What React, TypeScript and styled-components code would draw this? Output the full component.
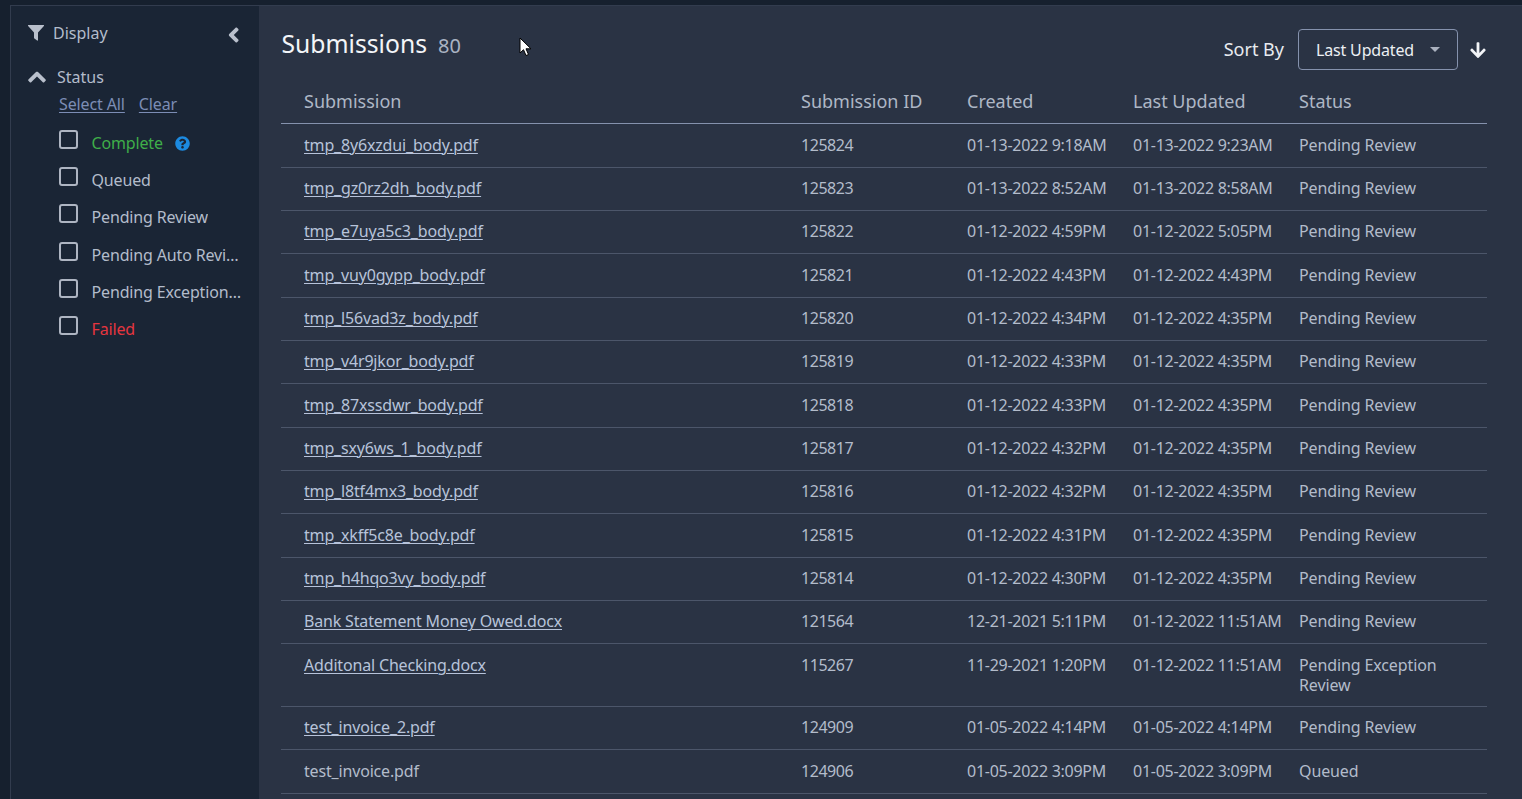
import React from "react";
import styled, { createGlobalStyle } from "styled-components";

const Global = createGlobalStyle`
  html, body { margin: 0; padding: 0; height: 100%; overflow: hidden; background: #16202e; }
  body { font-family: "Noto Sans", sans-serif; font-size: 16px; }
`;

const Page = styled.div`
  display: flex;
  height: 799px;
  padding: 5px 0 0 10px;
  box-sizing: border-box;
  background: #16202e;
`;

const Shell = styled.div`
  display: flex;
  flex: 1;
  min-width: 0;
  border-top: 1px solid #323c4e;
  border-left: 1px solid #323c4e;
`;

const Sidebar = styled.aside`
  width: 248px;
  flex: none;
  box-sizing: border-box;
  background: #1a2535;
  padding: 15px 0 0 17px;
  color: #b3bccb;
`;

const SideHead = styled.div`
  display: flex;
  align-items: center;
  height: 24px;
  font-size: 16px;
`;

const HeadLabel = styled.span`
  margin-left: 9px;
  flex: 1;
`;

const Collapse = styled.svg`
  width: 12px;
  height: 16px;
  margin-right: 19px;
  margin-top: 4px;
  fill: #b9c0cc;
`;

const StatusHead = styled.div`
  display: flex;
  align-items: center;
  height: 24px;
  margin-top: 20px;
`;

const StatusLabel = styled.span`
  margin-left: 11px;
`;

const LinkRow = styled.div`
  display: flex;
  gap: 14px;
  margin: 4px 0 0 31px;
  height: 22px;
  line-height: 22px;
  letter-spacing: -0.12px;
`;

const SideLink = styled.a`
  color: #7c8db5;
  text-decoration: underline;
  text-underline-offset: 2px;
  text-decoration-thickness: 1px;
`;

const Options = styled.ul`
  list-style: none;
  margin: 13px 0 0 31px;
  padding: 0;
`;

const Option = styled.li`
  display: flex;
  height: 37.2px;
  width: 184px;
`;

const Box = styled.span`
  width: 15px;
  height: 15px;
  flex: none;
  margin-top: 2px;
  border: 2px solid #aeb5c2;
  border-radius: 3px;
`;

const OptionLabel = styled.span<{ $tone?: string }>`
  margin-left: 13.5px;
  margin-top: 4px;
  line-height: 22px;
  height: 24px;
  letter-spacing: -0.15px;
  color: ${(p) => p.$tone ?? "#b3bccb"};
  white-space: nowrap;
  overflow: hidden;
  text-overflow: ellipsis;
`;

const Help = styled.svg`
  width: 15px;
  height: 15px;
  margin: 8px 0 0 12px;
  flex: none;
`;

const Main = styled.main`
  flex: 1;
  min-width: 0;
  background: #2a3344;
  padding: 0 35px 0 22px;
  position: relative;
  overflow: hidden;
`;

const TopBar = styled.div`
  display: flex;
  align-items: flex-start;
  height: 78px;
`;

const Title = styled.h1`
  margin: 19px 0 0 0.5px;
  font-size: 24.7px;
  line-height: 38px;
  font-weight: 400;
  color: #f3f5f8;
`;

const Count = styled.span`
  margin: 23px 0 0 11px;
  font-size: 20px;
  line-height: 34px;
  color: #aab3c3;
`;

const SortArea = styled.div`
  margin-left: auto;
  margin-top: 23px;
  margin-right: 1px;
  display: flex;
  align-items: center;
`;

const SortLabel = styled.span`
  color: #e8ebf0;
  font-size: 18px;
  line-height: 38px;
  margin: 0 14px 2px 0;
`;

const Select = styled.div`
  width: 160px;
  height: 41px;
  box-sizing: border-box;
  border: 1px solid #8592ad;
  border-radius: 4px;
  display: flex;
  align-items: center;
  padding-left: 17px;
  color: #eceff3;
  font-size: 16px;
  letter-spacing: -0.17px;
`;

const Caret = styled.span`
  margin-left: 16px;
  width: 0;
  height: 0;
  border-left: 5.5px solid transparent;
  border-right: 5.5px solid transparent;
  border-top: 5.5px solid #aab1bf;
`;

const SortArrow = styled.svg`
  width: 16px;
  height: 18px;
  margin-left: 12px;
  fill: #f2f4f7;
`;

const Cols = "497px 166px 166px 166px 1fr";

const HeaderRow = styled.div`
  display: grid;
  grid-template-columns: ${Cols};
  height: 40px;
  box-sizing: border-box;
  padding-left: 23px;
  border-bottom: 1px solid #8592ad;
  color: #aeb7c6;
  font-size: 18px;
  line-height: 34px;
`;

const Body = styled.div`
  padding-top: 0.33px;
`;

const Row = styled.div<{ $tall?: boolean }>`
  display: grid;
  grid-template-columns: ${Cols};
  height: ${(p) => (p.$tall ? "62.67px" : "43.33px")};
  box-sizing: border-box;
  padding: 10.33px 0 0 23px;
  border-bottom: 1px solid #4c566a;
  color: #b3bccb;
  font-size: 16px;
  line-height: 20px;
`;

const NameCell = styled.span`
  letter-spacing: -0.17px;
`;

const FileLink = styled.a`
  color: #b7c3da;
  text-decoration: underline;
  text-underline-offset: 2px;
  text-decoration-thickness: 1px;
`;

const IdCell = styled.span`
  letter-spacing: -0.45px;
`;

const DateCell = styled.span`
  letter-spacing: -0.27px;
`;

const StatusCell = styled.span`
  white-space: pre-line;
  letter-spacing: -0.12px;
`;

const Pointer = styled.svg`
  position: absolute;
  left: 260px;
  top: 31px;
  width: 13px;
  height: 20px;
`;

type R = [string, string, string, string, string, boolean?];

const rows: R[] = [
  ["tmp_8y6xzdui_body.pdf", "125824", "01-13-2022 9:18AM", "01-13-2022 9:23AM", "Pending Review"],
  ["tmp_gz0rz2dh_body.pdf", "125823", "01-13-2022 8:52AM", "01-13-2022 8:58AM", "Pending Review"],
  ["tmp_e7uya5c3_body.pdf", "125822", "01-12-2022 4:59PM", "01-12-2022 5:05PM", "Pending Review"],
  ["tmp_vuy0gypp_body.pdf", "125821", "01-12-2022 4:43PM", "01-12-2022 4:43PM", "Pending Review"],
  ["tmp_l56vad3z_body.pdf", "125820", "01-12-2022 4:34PM", "01-12-2022 4:35PM", "Pending Review"],
  ["tmp_v4r9jkor_body.pdf", "125819", "01-12-2022 4:33PM", "01-12-2022 4:35PM", "Pending Review"],
  ["tmp_87xssdwr_body.pdf", "125818", "01-12-2022 4:33PM", "01-12-2022 4:35PM", "Pending Review"],
  ["tmp_sxy6ws_1_body.pdf", "125817", "01-12-2022 4:32PM", "01-12-2022 4:35PM", "Pending Review"],
  ["tmp_l8tf4mx3_body.pdf", "125816", "01-12-2022 4:32PM", "01-12-2022 4:35PM", "Pending Review"],
  ["tmp_xkff5c8e_body.pdf", "125815", "01-12-2022 4:31PM", "01-12-2022 4:35PM", "Pending Review"],
  ["tmp_h4hqo3vy_body.pdf", "125814", "01-12-2022 4:30PM", "01-12-2022 4:35PM", "Pending Review"],
  ["Bank Statement Money Owed.docx", "121564", "12-21-2021 5:11PM", "01-12-2022 11:51AM", "Pending Review"],
  ["Additonal Checking.docx", "115267", "11-29-2021 1:20PM", "01-12-2022 11:51AM", "Pending Exception\nReview"],
  ["test_invoice_2.pdf", "124909", "01-05-2022 4:14PM", "01-05-2022 4:14PM", "Pending Review"],
  ["test_invoice.pdf", "124906", "01-05-2022 3:09PM", "01-05-2022 3:09PM", "Queued", true],
];

const options: { label: string; tone?: string; help?: boolean }[] = [
  { label: "Complete", tone: "#3fae49", help: true },
  { label: "Queued" },
  { label: "Pending Review" },
  { label: "Pending Auto Review" },
  { label: "Pending Exception Review" },
  { label: "Failed", tone: "#e5353f" },
];

export default function App() {
  return (
    <>
      <Global />
      <Page>
        <Shell>
          <Sidebar>
            <SideHead>
              <svg width="16" height="16" viewBox="0 0 16 16">
                <path d="M0.5 0h15c.5 0 .7.5.4.9L10 7.500V15c0 .6-.5.8-.9.5L6.400 13.500c-.3-.2-.4-.5-.4-.8V7.500L.1.900C-.2.500 0 0 .5 0z" fill="#b9c0cc" />
              </svg>
              <HeadLabel>Display</HeadLabel>
              <Collapse viewBox="0 0 12 16">
                <path d="M1.200 7L7.600 .7c.4-.4 1-.4 1.400 0l1.300 1.300c.4.4.4 1 0 1.400L5.800 8l4.500 4.600c.4.4.4 1 0 1.400L9 15.300c-.4.4-1 .4-1.400 0L1.200 9c-.5-.6-.5-1.400 0-2z" />
              </Collapse>
            </SideHead>
            <StatusHead>
              <svg width="18" height="12" viewBox="0 0 18 12">
                <path d="M8 1L.4 8.400c-.4.4-.4 1 0 1.400l1.400 1.400c.4.4 1 .4 1.400 0L9 5.600l5.800 5.600c.4.4 1 .4 1.400 0l1.400-1.400c.4-.4.4-1 0-1.400L10 1c-.6-.5-1.400-.5-2 0z" fill="#b9c0cc" />
              </svg>
              <StatusLabel>Status</StatusLabel>
            </StatusHead>
            <LinkRow>
              <SideLink>Select All</SideLink>
              <SideLink>Clear</SideLink>
            </LinkRow>
            <Options>
              {options.map((o) => (
                <Option key={o.label}>
                  <Box />
                  <OptionLabel $tone={o.tone}>{o.label}</OptionLabel>
                  {o.help && (
                    <Help viewBox="0 0 512 512">
                      <path fill="#1c8ae0" d="M504 256c0 137-111 248-248 248S8 393 8 256 119 8 256 8s248 111 248 248zM262.700 90c-54.500 0-89.300 23-116.500 63.800-3.500 5.300-2.400 12.400 2.700 16.300l34.700 26.300c5.200 3.900 12.600 3 16.700-2.100 17.900-22.700 30.100-35.800 57.300-35.800 20.400 0 45.700 13.100 45.700 32.900 0 15-12.400 22.700-32.500 34-23.500 13.200-54.600 29.600-54.600 70.600V302c0 6.600 5.400 12 12 12h56c6.600 0 12-5.400 12-12v-1.300c0-28.400 83-29.600 83-106.500 0-57.900-60.100-104.200-116.500-104.200zM256 338c-25.400 0-46 20.600-46 46 0 25.400 20.600 46 46 46s46-20.600 46-46c0-25.400-20.600-46-46-46z" />
                    </Help>
                  )}
                </Option>
              ))}
            </Options>
          </Sidebar>
          <Main>
            <TopBar>
              <Title>Submissions</Title>
              <Count>80</Count>
              <SortArea>
                <SortLabel>Sort By</SortLabel>
                <Select>
                  Last Updated
                  <Caret />
                </Select>
                <SortArrow viewBox="0 0 448 512">
                  <path d="M413.100 222.500l22.200 22.200c9.400 9.400 9.400 24.600 0 33.900L241 473c-9.400 9.400-24.600 9.400-33.900 0L12.700 278.600c-9.400-9.400-9.400-24.600 0-33.900l22.200-22.200c9.500-9.500 25-9.300 34.300.4L184 343.400V56c0-13.300 10.700-24 24-24h32c13.300 0 24 10.700 24 24v287.400l114.800-120.500c9.300-9.800 24.800-10 34.300-.4z" />
                </SortArrow>
              </SortArea>
            </TopBar>
            <HeaderRow>
              <span>Submission</span>
              <span>Submission ID</span>
              <span>Created</span>
              <span>Last Updated</span>
              <span>Status</span>
            </HeaderRow>
            <Body>
              {rows.map((r) => (
                <Row key={r[1]} $tall={r[4].includes("\n")}>
                  <NameCell>{r[5] ? r[0] : <FileLink>{r[0]}</FileLink>}</NameCell>
                  <IdCell>{r[1]}</IdCell>
                  <DateCell>{r[2]}</DateCell>
                  <DateCell>{r[3]}</DateCell>
                  <StatusCell>{r[4]}</StatusCell>
                </Row>
              ))}
            </Body>
            <Pointer viewBox="0 0 13 20">
              <path d="M1 1v15l3.500-3.300 2.500 5.800 2.500-1-2.500-5.700h5z" fill="#fff" stroke="#000" strokeWidth="1" />
            </Pointer>
          </Main>
        </Shell>
      </Page>
    </>
  );
}
